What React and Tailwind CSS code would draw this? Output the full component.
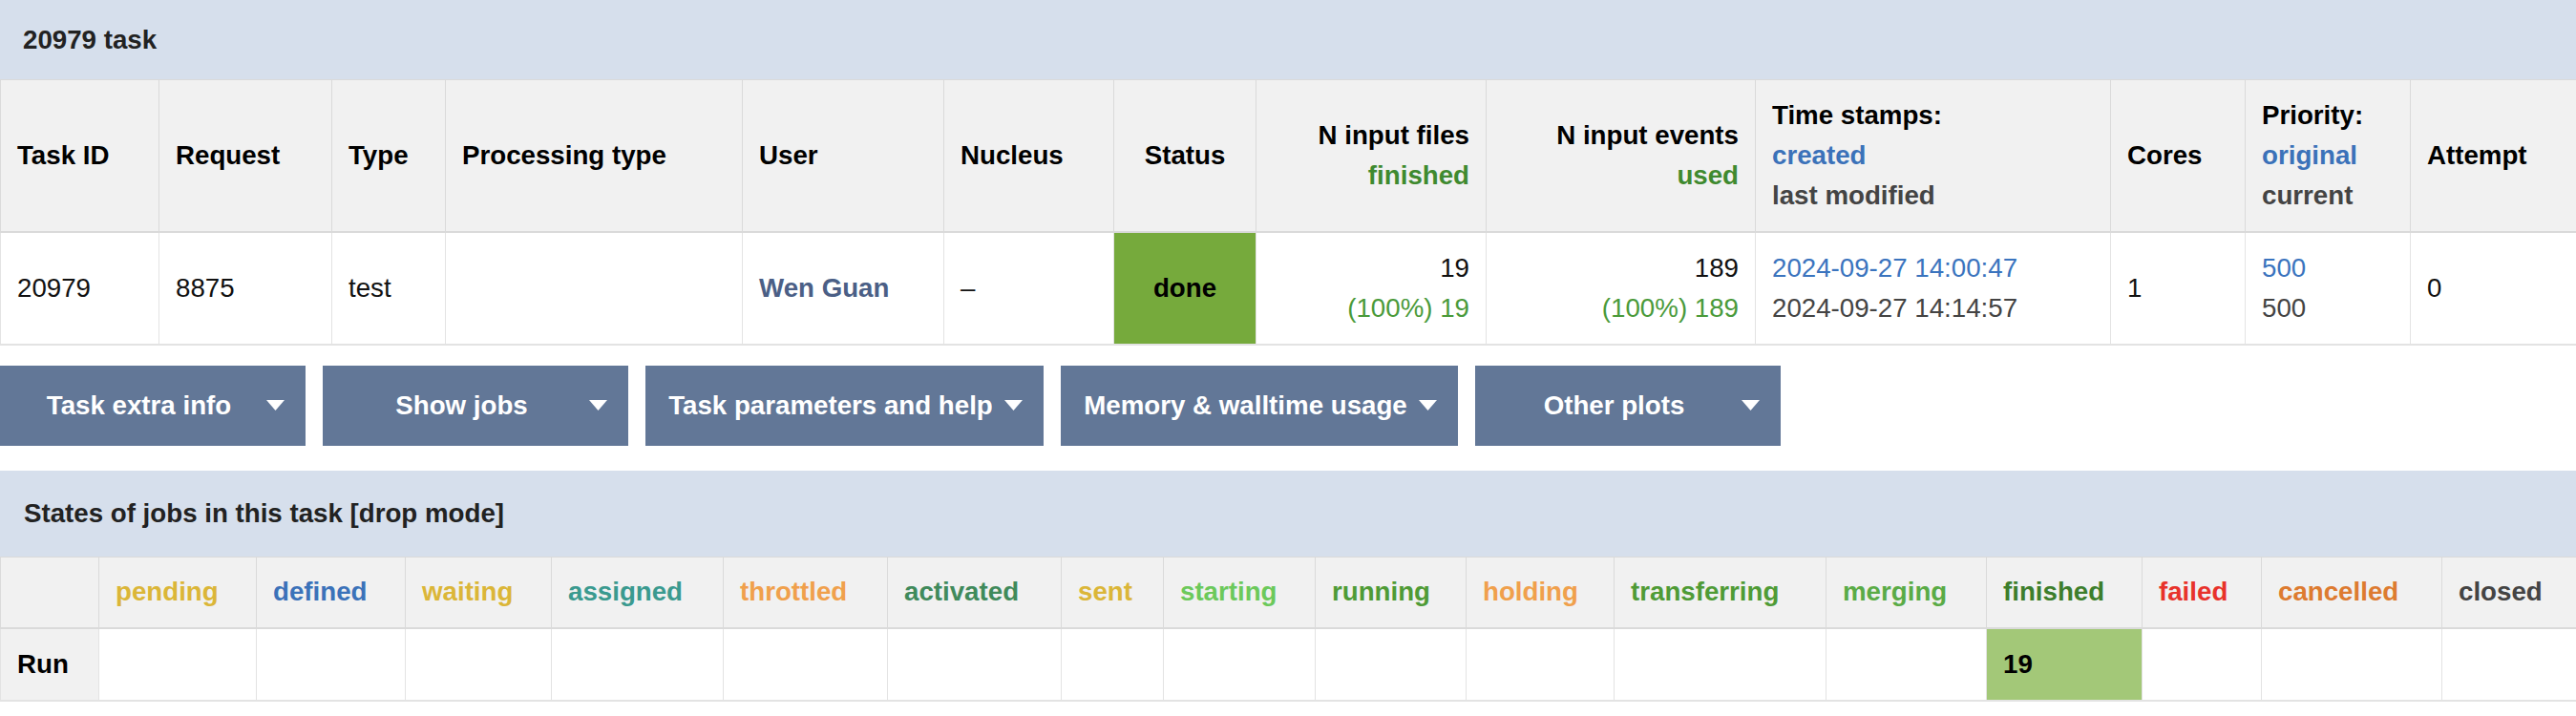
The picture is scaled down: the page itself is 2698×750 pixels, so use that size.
import React from 'react'

const topColClasses = [
  'w-[166px]', 'w-[181px]', 'w-[119px]', 'w-[311px]', 'w-[211px]', 'w-[178px]', 'w-[149px]',
  'w-[241px]', 'w-[282px]', 'w-[372px]', 'w-[141px]', 'w-[173px]', 'w-[174px]',
]

const stateColClasses = [
  'w-[103px]', 'w-[165px]', 'w-[156px]', 'w-[153px]', 'w-[180px]', 'w-[172px]', 'w-[182px]', 'w-[107px]',
  'w-[159px]', 'w-[158px]', 'w-[155px]', 'w-[222px]', 'w-[168px]', 'w-[163px]', 'w-[125px]', 'w-[189px]', 'w-[141px]',
]

const states = [
  { name: 'pending', color: 'text-[#dbb638]' },
  { name: 'defined', color: 'text-[#3b72b9]' },
  { name: 'waiting', color: 'text-[#dbb638]' },
  { name: 'assigned', color: 'text-[#3a9a8f]' },
  { name: 'throttled', color: 'text-[#f0a04c]' },
  { name: 'activated', color: 'text-[#408a5b]' },
  { name: 'sent', color: 'text-[#dbb638]' },
  { name: 'starting', color: 'text-[#6cc95b]' },
  { name: 'running', color: 'text-[#4f9b36]' },
  { name: 'holding', color: 'text-[#f0a04c]' },
  { name: 'transferring', color: 'text-[#4f9b36]' },
  { name: 'merging', color: 'text-[#5aab46]' },
  { name: 'finished', color: 'text-[#3d7e2c]', count: 19 },
  { name: 'failed', color: 'text-[#e8322b]' },
  { name: 'cancelled', color: 'text-[#dd7b30]' },
  { name: 'closed', color: 'text-[#444444]' },
]

const buttons = [
  { label: 'Task extra info', w: 'w-[320px]' },
  { label: 'Show jobs', w: 'w-[320px]' },
  { label: 'Task parameters and help', w: 'w-[417px]' },
  { label: 'Memory & walltime usage', w: 'w-[416px]' },
  { label: 'Other plots', w: 'w-[320px]' },
]

function Caret() {
  return (
    <svg width="19" height="11" viewBox="0 0 19 11" className="ml-[10px] shrink-0">
      <polygon points="0,0 19,0 9.5,11" fill="#ffffff" />
    </svg>
  )
}

// base cell styles, colour is added per cell
const th = 'border border-[#dadada] px-[17px] align-middle font-bold'
const td = 'border border-[#e3e3e3] px-[17px] align-middle'

export default function App() {
  return (
    <div className="w-[2698px] min-h-[750px] bg-white font-['Liberation_Sans',Arial,sans-serif] text-[27.7px] leading-[42px]">
      {/* task title */}
      <div className="h-[83px] bg-[#d6dfec] flex items-center px-[24px] font-bold text-[#222]">20979 task</div>

      <table className="w-full table-fixed border-collapse">
        <colgroup>
          {topColClasses.map((c, i) => (
            <col key={i} className={c} />
          ))}
        </colgroup>
        <thead>
          <tr className="h-[159px] bg-[#f1f1f1] border-b-2 border-[#dadada] text-black">
            <th className={`${th} text-left`}>Task ID</th>
            <th className={`${th} text-left`}>Request</th>
            <th className={`${th} text-left`}>Type</th>
            <th className={`${th} text-left`}>Processing type</th>
            <th className={`${th} text-left`}>User</th>
            <th className={`${th} text-left`}>Nucleus</th>
            <th className={`${th} text-center`}>Status</th>
            <th className={`${th} text-right`}>
              <div>N input files</div>
              <div className="text-[#3f8a2f]">finished</div>
            </th>
            <th className={`${th} text-right`}>
              <div>N input events</div>
              <div className="text-[#3f8a2f]">used</div>
            </th>
            <th className={`${th} text-left`}>
              <div>Time stamps:</div>
              <div className="text-[#3b72b9]">created</div>
              <div className="text-[#444]">last modified</div>
            </th>
            <th className={`${th} text-left`}>Cores</th>
            <th className={`${th} text-left`}>
              <div>Priority:</div>
              <div className="text-[#3b72b9]">original</div>
              <div className="text-[#444]">current</div>
            </th>
            <th className={`${th} text-left`}>Attempt</th>
          </tr>
        </thead>
        <tbody>
          <tr className="h-[118px] border-b-2 border-[#e3e3e3] text-[#111]">
            <td className={td}>20979</td>
            <td className={td}>8875</td>
            <td className={td}>test</td>
            <td className={td}></td>
            <td className={`${td} font-bold text-[#4b5f86]`}>Wen Guan</td>
            <td className={td}>–</td>
            <td className={`${td} bg-[#76aa3c] text-center font-bold text-black`}>done</td>
            <td className={`${td} text-right`}>
              <div>19</div>
              <div className="text-[#4a9a3a]">(100%) 19</div>
            </td>
            <td className={`${td} text-right`}>
              <div>189</div>
              <div className="text-[#4a9a3a]">(100%) 189</div>
            </td>
            <td className={td}>
              <div className="text-[#3b74be]">2024-09-27 14:00:47</div>
              <div className="text-[#444]">2024-09-27 14:14:57</div>
            </td>
            <td className={td}>1</td>
            <td className={td}>
              <div className="text-[#3b74be]">500</div>
              <div className="text-[#444]">500</div>
            </td>
            <td className={td}>0</td>
          </tr>
        </tbody>
      </table>

      {/* dropdown buttons */}
      <div className="mt-[21px] flex gap-[18px]">
        {buttons.map((b) => (
          <div key={b.label} className={`${b.w} h-[84px] bg-[#627797] flex items-center px-[22px] text-white font-bold`}>
            <span className="flex-1 text-center whitespace-nowrap">{b.label}</span>
            <Caret />
          </div>
        ))}
      </div>

      {/* job states */}
      <div className="mt-[26px] h-[90px] bg-[#d6dfec] flex items-center px-[25px] font-bold text-[#222]">
        States of jobs in this task [drop mode]
      </div>

      <table className="w-full table-fixed border-collapse">
        <colgroup>
          {stateColClasses.map((c, i) => (
            <col key={i} className={c} />
          ))}
        </colgroup>
        <thead>
          <tr className="h-[75px] bg-[#f1f1f1] border-b-2 border-[#dadada]">
            <th className={th}></th>
            {states.map((s) => (
              <th key={s.name} className={`${th} text-left ${s.color}`}>
                {s.name}
              </th>
            ))}
          </tr>
        </thead>
        <tbody>
          <tr className="h-[76px] border-b-2 border-[#e3e3e3] text-black">
            <td className={`${td} bg-[#f1f1f1] font-bold`}>Run</td>
            {states.map((s) =>
              s.count ? (
                <td key={s.name} className={`${td} bg-[#a3c878] font-bold`}>
                  {s.count}
                </td>
              ) : (
                <td key={s.name} className={td}></td>
              )
            )}
          </tr>
        </tbody>
      </table>
    </div>
  )
}
